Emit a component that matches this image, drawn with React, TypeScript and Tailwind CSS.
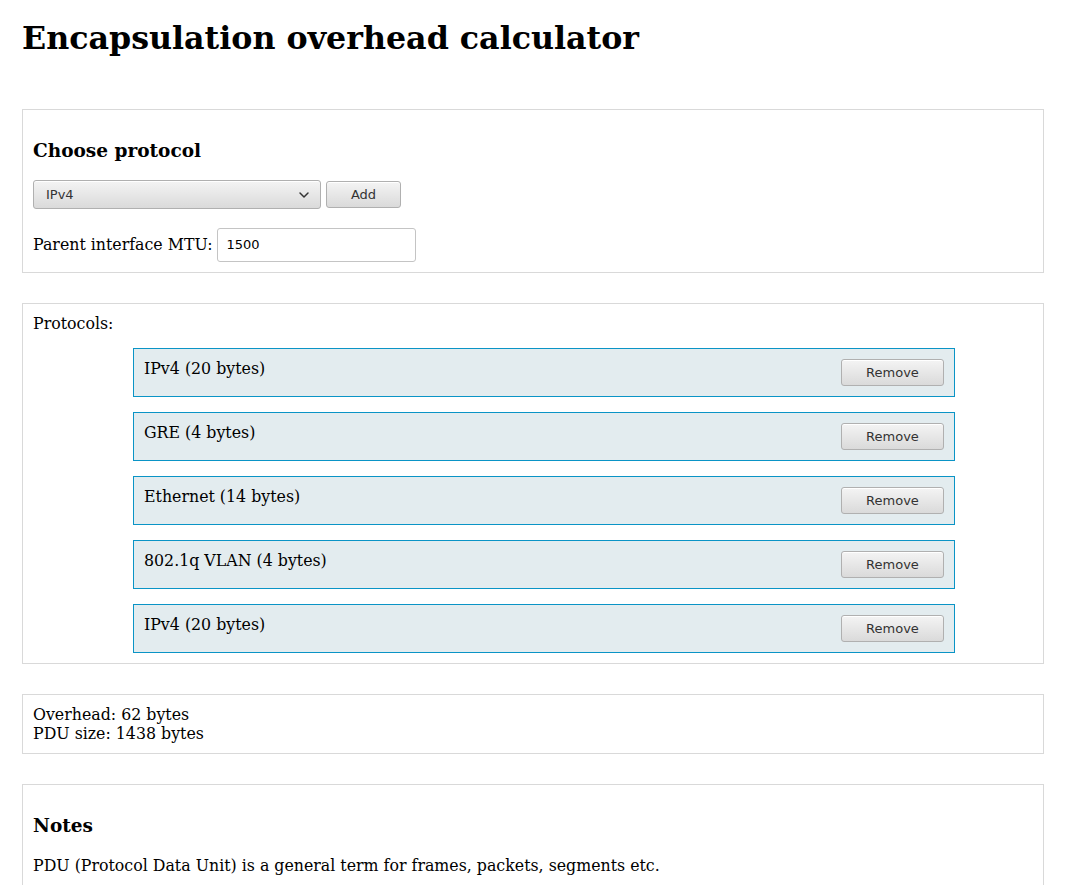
import { ChevronDown } from "lucide-react";

const protocols = [
  { name: "IPv4", size: 20 },
  { name: "GRE", size: 4 },
  { name: "Ethernet", size: 14 },
  { name: "802.1q VLAN", size: 4 },
  { name: "IPv4", size: 20 },
];

const serif = "font-['DejaVu_Serif',serif]";
const sans = "font-['DejaVu_Sans',sans-serif]";
const gtkButton =
  "bg-gradient-to-b from-[#f4f4f4] to-[#dadada] border border-[#b0b0b0] rounded-[3px] text-[#333] text-[13px] shadow-[inset_0_1px_0_#fff]";

const App = () => {
  const overhead = protocols.reduce((acc, p) => acc + p.size, 0);

  return (
    <div className={`${serif} text-black bg-white min-h-screen px-[22px] pt-[18px] pb-10`}>
      <h1 className="text-[31.7px] font-bold leading-[40px] m-0">Encapsulation overhead calculator</h1>

      <div className="w-[1022px] mt-[51px] border border-[#d9d9d9] p-[10px]">
        <h3 className="text-[18.5px] font-bold leading-[22px] mt-[20px]">Choose protocol</h3>
        <div className="flex items-center gap-[5px] mt-[18px]">
          <div className={`${gtkButton} w-[288px] h-[29px] flex items-center justify-between pl-3 pr-2`}>
            <span className={sans}>IPv4</span>
            <ChevronDown size={16} strokeWidth={2.2} className="text-[#333]" />
          </div>
          <button className={`${gtkButton} ${sans} w-[75px] h-[27px]`}>Add</button>
        </div>
        <div className="flex items-center gap-[4px] mt-[19px] text-[15.8px]">
          <span>Parent interface MTU:</span>
          <div className={`${sans} w-[199px] h-[34px] border border-[#c4c4c4] rounded-[3px] flex items-center px-[9px] text-[13px]`}>
            1500
          </div>
        </div>
      </div>

      <div className="w-[1022px] mt-[30px] border border-[#d9d9d9] p-[10px]">
        <div className="text-[15.8px] leading-[19px]">Protocols:</div>
        <div className="flex flex-col gap-[15px] mt-[15px] ml-[100px] w-[822px]">
          {protocols.map((p, i) => (
            <div key={i} className="bg-[#e3ecef] border border-[#0a94c6] p-[10px] flex justify-between items-start h-[49px]">
              <span className="text-[15.8px] leading-[20px]">
                {p.name} ({p.size} bytes)
              </span>
              <button className={`${gtkButton} ${sans} w-[103px] h-[27px]`}>Remove</button>
            </div>
          ))}
        </div>
      </div>

      <div className="w-[1022px] mt-[30px] border border-[#d9d9d9] pt-[11px] pb-[10px] px-[10px] text-[15.8px] leading-[18.6px]">
        <div>Overhead: {overhead} bytes</div>
        <div>PDU size: {1500 - overhead} bytes</div>
      </div>

      <div className="w-[1022px] mt-[30px] border border-[#d9d9d9] p-[10px]">
        <h3 className="text-[18.5px] font-bold leading-[22px] mt-[20px]">Notes</h3>
        <p className="text-[15.8px] leading-[19px] mt-[19px] mb-[16px]">
          PDU (Protocol Data Unit) is a general term for frames, packets, segments etc.
        </p>
      </div>
    </div>
  );
};

export default App;
